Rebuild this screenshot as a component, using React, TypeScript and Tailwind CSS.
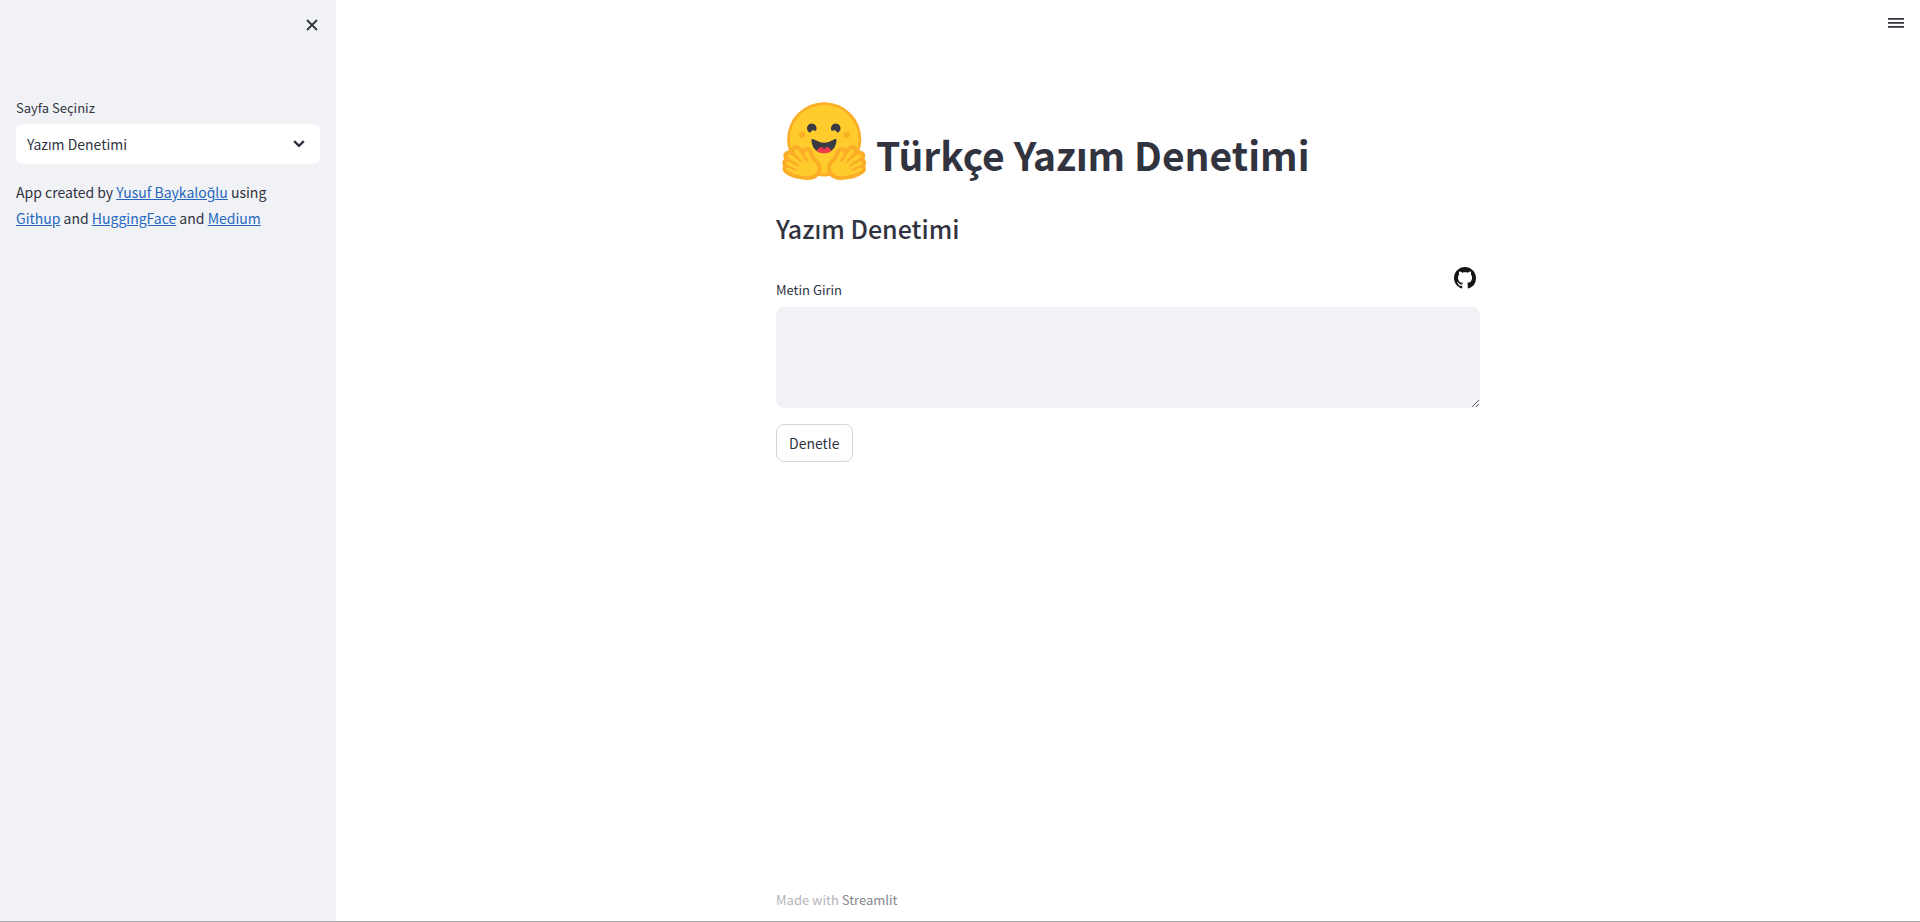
import type { ReactNode } from "react";

const OUTER_HAND =
  "M17.52 48c-1.62 0-3.06.66-4.07 1.87a5.97 5.97 0 0 0-1.33 3.76 7.1 7.1 0 0 0-1.94-.3c-1.55 0-2.95.59-3.94 1.66a5.8 5.8 0 0 0-.8 7 5.3 5.3 0 0 0-1.79 2.82c-.24.9-.48 2.8.8 4.74a5.22 5.22 0 0 0-.37 5.02c1.02 2.32 3.57 4.14 8.52 6.1 3.07 1.22 5.89 2 5.91 2.01a44.33 44.33 0 0 0 10.93 1.6c5.86 0 10.05-1.8 12.46-5.34 3.88-5.69 3.33-10.9-1.7-15.92-2.77-2.78-4.62-6.87-5-7.77-.78-2.66-2.84-5.62-6.25-5.62a5.7 5.7 0 0 0-4.6 2.46c-1-1.26-1.98-2.25-2.86-2.82A7.4 7.4 0 0 0 17.52 48Z";
const INNER_HAND =
  "M38.6 76.69c2.75-4.04 2.55-7.07-1.22-10.84-3.78-3.77-5.98-9.3-5.98-9.3s-.82-3.2-2.69-2.9c-1.87.3-3.24 5.08.68 8.01 3.91 2.93-.78 4.92-2.29 2.17-1.5-2.75-5.62-9.82-7.76-11.18-2.13-1.35-3.63-.6-3.13 2.2.5 2.79 9.43 9.55 8.56 11-.87 1.47-3.93-1.71-3.93-1.71s-9.57-8.71-11.66-6.44c-2.08 2.27 1.59 4.17 6.8 7.33 5.23 3.16 5.64 4 4.9 5.2-.75 1.2-12.28-8.53-13.36-4.4-1.08 4.11 11.77 5.3 10.98 8.15-.8 2.85-9.06-5.38-10.74-2.18-1.7 3.21 11.65 6.98 11.76 7.01 4.3 1.12 15.25 3.49 19.08-2.12Z";

function Hand() {
  return (
    <>
      <path d={OUTER_HAND} fill="#fbad27" />
      <path d={INNER_HAND} fill="#ffcb2d" />
    </>
  );
}

function HuggingFace() {
  return (
    <svg viewBox="0 0 95 88" className="h-[85px] w-[91px] shrink-0" aria-hidden="true">
      <circle cx="47.2" cy="41.75" r="38.75" fill="#fbad27" />
      <circle cx="47.2" cy="41.75" r="36" fill="#ffcb2d" />
      <path
        fill="#3a3b45"
        d="M58.5 32.29c1.28.45 1.78 3.07 3.07 2.39a5 5 0 1 0-6.76-2.07c.61 1.15 2.55-.72 3.7-.32ZM34.95 32.29c-1.28.45-1.79 3.07-3.07 2.39a5 5 0 1 1 6.76-2.07c-.61 1.15-2.56-.72-3.7-.32Z"
      />
      <path
        fill="#3a3b45"
        d="M46.96 56.29c9.83 0 13-8.76 13-13.26 0-2.34-1.57-1.6-4.09-.36-2.33 1.15-5.46 2.74-8.9 2.74-7.19 0-13-6.88-13-2.38s3.16 13.26 13 13.26Z"
      />
      <path
        fill="#f23a4c"
        d="M39.43 54a8.7 8.7 0 0 1 5.3-4.49c.4-.12.81.57 1.24 1.28.4.68.82 1.37 1.24 1.37.45 0 .9-.68 1.33-1.35.45-.7.89-1.38 1.32-1.25a8.61 8.61 0 0 1 5 4.17c-1.94 1.54-4.5 2.56-7.9 2.56-3.18 0-5.64-.88-7.53-2.29Z"
      />
      <circle cx="70.71" cy="37" r="3.25" fill="#fbad27" />
      <circle cx="24.21" cy="37" r="3.25" fill="#fbad27" />
      <Hand />
      <g transform="translate(94.5 0) scale(-1 1)">
        <Hand />
      </g>
    </svg>
  );
}

function TextLink({ href, children }: { href: string; children: ReactNode }) {
  return (
    <a href={href} className="text-[#2668c0] underline">
      {children}
    </a>
  );
}

function Sidebar() {
  return (
    <aside className="flex w-[336px] shrink-0 flex-col bg-[#f0f2f6] px-4">
      <div className="-mr-2 flex h-[50px] items-center justify-end">
        <button type="button" aria-label="Close sidebar" className="flex size-8 items-center justify-center">
          <svg viewBox="0 0 16 16" className="size-4" stroke="currentColor" strokeWidth="1.8" aria-hidden="true">
            <path d="M3 3l10 10M13 3L3 13" />
          </svg>
        </button>
      </div>
      <div className="flex flex-col gap-[5px] pt-[47px]">
        <label htmlFor="page" className="text-[13px] leading-[22px]">
          Sayfa Seçiniz
        </label>
        <div className="grid items-center">
          <select
            id="page"
            className="col-start-1 row-start-1 h-10 w-full appearance-none rounded-lg bg-white px-[11px] text-[14px]"
          >
            <option>Yazım Denetimi</option>
          </select>
          <svg
            viewBox="0 0 12 8"
            className="pointer-events-none col-start-1 row-start-1 mr-[15px] h-2 w-3 justify-self-end"
            fill="none"
            stroke="currentColor"
            strokeWidth="2.4"
            aria-hidden="true"
          >
            <path d="M1.2 1.2L6 5.8l4.8-4.6" />
          </svg>
        </div>
      </div>
      <p className="mt-[15px] text-[14px] leading-[26px]">
        App created by <TextLink href="#yusuf">Yusuf Baykaloğlu</TextLink> using
        <br />
        <TextLink href="#githup">Githup</TextLink> and <TextLink href="#huggingface">HuggingFace</TextLink> and{" "}
        <TextLink href="#medium">Medium</TextLink>
      </p>
    </aside>
  );
}

export default function App() {
  return (
    <div className="flex min-h-screen flex-col border-b border-[#a9a9ab] bg-white font-['Noto_Sans_CJK_SC','Noto_Sans',sans-serif] text-[#31333f]">
      <div className="flex grow">
        <Sidebar />
        <div className="flex min-w-0 grow flex-col">
          <header className="flex h-12 items-center justify-end pr-2">
            <button type="button" aria-label="Menu" className="flex size-8 items-center justify-center">
              <svg viewBox="0 0 16 12" className="h-3 w-4" fill="currentColor" aria-hidden="true">
                <path d="M0 0h16v1.7H0zM0 4h16v1.7H0zM0 8h16v1.7H0z" />
              </svg>
            </button>
          </header>
          <main className="mx-auto flex w-full max-w-[736px] grow flex-col px-4 pt-[51px]">
            <h1 className="flex items-start gap-[6px] pl-[3px] text-[39px] leading-[53px] font-bold">
              <HuggingFace />
              <span className="pt-[29px]">Türkçe Yazım Denetimi</span>
            </h1>
            <h2 className="mt-[27px] text-[25px] leading-[34px] font-medium">Yazım Denetimi</h2>
            <div className="mt-[21px] flex items-start justify-between">
              <label htmlFor="text" className="pt-[13px] text-[13px] leading-[22px]">
                Metin Girin
              </label>
              <a href="#github" aria-label="GitHub" className="mr-[3px]">
                <svg viewBox="0 0 16 16" className="size-6 p-px" fill="#15151a" aria-hidden="true">
                  <path d="M8 0C3.58 0 0 3.58 0 8c0 3.54 2.29 6.53 5.47 7.59.4.07.55-.17.55-.38 0-.19-.01-.82-.01-1.49-2.01.37-2.53-.49-2.69-.94-.09-.23-.48-.94-.82-1.13-.28-.15-.68-.52-.01-.53.63-.01 1.08.58 1.23.82.72 1.21 1.87.87 2.33.66.07-.52.28-.87.51-1.07-1.78-.2-3.64-.89-3.64-3.95 0-.87.31-1.59.82-2.15-.08-.2-.36-1.02.08-2.12 0 0 .67-.21 2.2.82.64-.18 1.32-.27 2-.27s1.36.09 2 .27c1.53-1.04 2.2-.82 2.2-.82.44 1.1.16 1.92.08 2.12.51.56.82 1.27.82 2.15 0 3.07-1.87 3.75-3.65 3.95.29.25.54.73.54 1.48 0 1.07-.01 1.93-.01 2.2 0 .21.15.46.55.38A8.01 8.01 0 0 0 16 8c0-4.42-3.58-8-8-8Z" />
                </svg>
              </a>
            </div>
            <textarea id="text" className="mt-[6px] block h-[101px] w-full resize-y rounded-lg bg-[#f0f2f6] p-4 text-[14px]" />
            <button
              type="button"
              className="mt-4 h-[38px] self-start rounded-lg border border-[#d6d6d9] px-3 text-[14px] leading-6"
            >
              Denetle
            </button>
          </main>
          <footer className="mx-auto w-full max-w-[736px] px-4 pb-[10px] text-[13px] leading-[22px] text-[#b4b5ba]">
            Made with{" "}
            <a href="#streamlit" className="text-[#84858c]">
              Streamlit
            </a>
          </footer>
        </div>
      </div>
    </div>
  );
}
